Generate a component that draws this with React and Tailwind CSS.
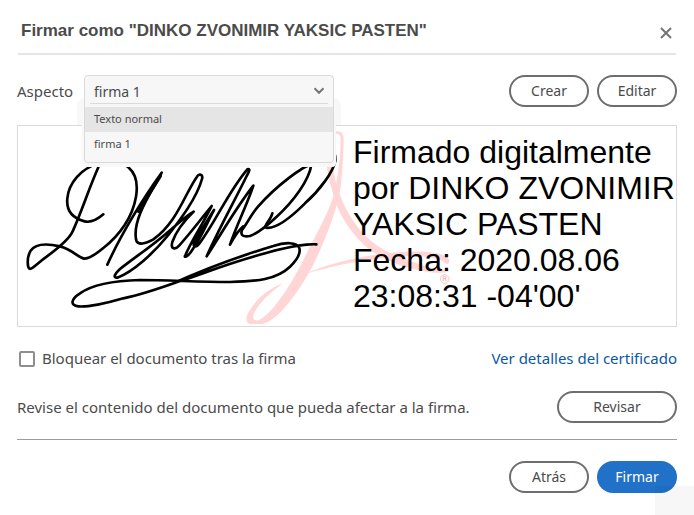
import { useState } from "react";

const appearances = ["Texto normal", "firma 1"];

function PillButton({ children, wide }) {
  return (
    <button
      type="button"
      className={
        (wide ? "w-30" : "w-20") +
        " h-8 shrink-0 rounded-full border-2 border-[#6e6e6e] bg-white text-sm text-[#4b4b4b]"
      }
    >
      {children}
    </button>
  );
}

function AppearanceSelect({ value, setValue }) {
  return (
    <div className="relative h-8 w-[250px]">
      <div className="absolute -left-[7px] top-[23px] h-[27px] w-[264px] rounded-t-lg bg-[#f8f8f8]"></div>
      <div className="absolute -left-[2px] top-[50px] h-[42px] w-[254px] rounded-b bg-[#f8f8f8]"></div>
      <div className="absolute left-0 top-0 w-full overflow-hidden rounded border border-[#dadada] bg-[#f7f7f7]">
        <div className="relative mx-[5px] mb-[3px] border-b border-[#dadada]">
          <select
            id="aspecto"
            value={value}
            onChange={(e) => setValue(e.target.value)}
            className="h-[27px] w-full appearance-none bg-transparent px-1 pt-1 text-sm text-[#4b4b4b] outline-none"
          >
            {appearances.map((name) => (
              <option key={name}>{name}</option>
            ))}
          </select>
          <svg
            viewBox="0 0 12 8"
            className="pointer-events-none absolute right-[3px] top-[11px] h-2 w-3"
            fill="none"
            stroke="#757575"
            strokeWidth="2"
          >
            <path d="M1.5 1.2 L6 5.8 L10.5 1.2" />
          </svg>
        </div>
        <ul className="pb-[5px] text-[11px] text-[#4b4b4b]">
          {appearances.map((name, i) => (
            <li key={name}>
              <button
                type="button"
                onClick={() => setValue(name)}
                className={
                  "block h-[25px] w-full px-[9px] text-left " +
                  (i === 0 ? "bg-[#e5e5e5]" : "")
                }
              >
                {name}
              </button>
            </li>
          ))}
        </ul>
      </div>
    </div>
  );
}

function SignatureDrawing() {
  return (
    <svg
      viewBox="24 18 1974 600"
      className="absolute left-0 top-0 h-[200px] w-[658px]"
      fill="none"
    >
      <g fill="#ffd5d5" transform="translate(510 0)">
        <path d="M462 35 C480 30 492 38 491 60 C489 130 485 190 478 225 C460 300 410 440 340 530 C300 585 265 612 240 612 L215 612 C195 612 195 590 210 570 C230 535 270 505 308 490 C270 520 240 545 222 580 C215 598 225 608 245 596 C290 565 340 480 375 410 C410 340 440 290 458 235 C475 170 482 110 482 60 C482 42 475 40 462 42 Z" />
        <path d="M438 120 L458 120 C462 170 470 205 480 225 C500 280 545 360 630 398 C690 425 760 450 808 452 C795 460 770 460 740 455 C680 445 620 425 570 390 C520 350 480 290 465 240 C450 190 442 160 438 120 Z" />
        <path d="M368 464 C450 430 560 400 680 395 C760 393 800 402 808 420 C808 432 800 435 795 428 C780 412 730 408 680 409 C560 415 470 435 368 464 Z" />
      </g>
      <circle cx="1304" cy="477" r="13" stroke="#ffc4c4" strokeWidth="3" />
      <text
        x="1304"
        y="484"
        textAnchor="middle"
        fill="#ffb8b8"
        fontSize="20"
        fontWeight="bold"
        fontFamily="Liberation Sans, sans-serif"
      >
        R
      </text>
      <g stroke="#000" strokeWidth="8" strokeLinecap="round" strokeLinejoin="round">
        <path d="M280 283 C258 302 240 308 224 304 C190 295 168 275 172 235 C176 190 212 145 268 130 C300 122 335 125 355 142 C378 162 384 195 378 230 C368 290 330 345 280 384 C256 404 236 416 222 416 C204 412 186 388 150 379 C110 370 75 372 62 392 C50 412 52 440 58 446 C66 450 84 428 110 410 C140 388 178 358 188 334 C215 275 235 210 265 142" />
        <path d="M292 434 C330 350 395 240 455 158 C425 215 364 300 379 362 C385 376 405 372 430 358 C500 310 525 220 561 170 C567 160 580 163 576 177 C560 235 510 300 475 345 C430 400 370 455 322 473 C308 474 314 462 330 447 C370 415 430 375 475 335 C500 315 525 290 551 275 C520 305 496 340 487 366 C481 388 496 390 508 376 C545 335 570 300 605 258 C580 310 545 360 526 406 C520 414 534 412 548 388 C575 350 595 300 612 270 C590 305 565 345 552 368 C548 384 560 382 570 368 C620 300 655 215 712 148 C722 144 718 155 710 168 C675 240 625 330 590 409 C635 340 680 260 730 197 C715 245 680 315 660 374 C672 352 684 332 700 319" />
        <path d="M452 168 C430 205 405 240 385 275" />
        <path d="M720 348 C700 352 690 346 696 330 C712 310 722 285 744 260 C800 196 880 138 904 134 C898 180 850 245 800 290 C770 318 742 340 720 348" />
        <path d="M787 280 C782 300 760 318 768 323 C800 328 850 285 885 250 C930 210 970 155 976 122 C977 112 976 106 973 100" />
        <path d="M919 373 C860 370 760 400 680 425 C610 447 560 468 508 484 C450 505 390 525 340 535 C290 550 230 562 205 559 C180 556 182 538 210 520 C250 492 310 482 390 480 C480 480 560 486 660 486 C740 485 800 478 840 440 C866 415 872 398 868 384 C860 366 825 366 790 378 C700 405 600 440 490 490" />
      </g>
    </svg>
  );
}

export default function App() {
  const [appearance, setAppearance] = useState("firma 1");
  const [locked, setLocked] = useState(false);

  return (
    <div className="relative min-h-screen bg-white px-[17px] pb-[22px] font-['Noto_Sans',sans-serif] text-[15px] text-[#4b4b4b]">
      <header className="mx-px flex h-[55px] items-center justify-between border-b-2 border-[#e5e5e5] pl-[3px] pr-1 pt-2">
        <h1 className="font-['Liberation_Sans',sans-serif] text-[17px] font-bold">
          Firmar como "DINKO ZVONIMIR YAKSIC PASTEN"
        </h1>
        <button type="button" aria-label="Cerrar" className="pt-1">
          <svg viewBox="0 0 12 12" className="h-3 w-3" stroke="#757575" strokeWidth="2">
            <path d="M1 1 L11 11 M11 1 L1 11" />
          </svg>
        </button>
      </header>

      <div className="relative z-10 mt-5 flex items-center">
        <label htmlFor="aspecto" className="w-[67px]">
          Aspecto
        </label>
        <AppearanceSelect value={appearance} setValue={setAppearance} />
        <div className="ml-auto flex gap-2">
          <PillButton>Crear</PillButton>
          <PillButton>Editar</PillButton>
        </div>
      </div>

      <div className="relative mt-[18px] border border-[#dadada] pb-3 pl-[335px] pt-2">
        <SignatureDrawing />
        <p className="relative whitespace-nowrap font-['Liberation_Sans',sans-serif] text-[32px] leading-9 text-black">
          Firmado digitalmente
          <br />
          por DINKO ZVONIMIR
          <br />
          YAKSIC PASTEN
          <br />
          Fecha: 2020.08.06
          <br />
          23:08:31 -04'00'
        </p>
      </div>

      <div className="mt-5 flex h-[23px] items-center justify-between">
        <label className="flex items-center gap-[7px] pl-0.5">
          <input
            type="checkbox"
            checked={locked}
            onChange={(e) => setLocked(e.target.checked)}
            className="h-4 w-4 appearance-none rounded-xs border-2 border-[#8e8e8e] bg-white checked:bg-[#2071c7]"
          />
          Bloquear el documento tras la firma
        </label>
        <a href="#certificado" className="text-[#0b57a4]">
          Ver detalles del certificado
        </a>
      </div>

      <div className="mt-[21px] flex items-center justify-between">
        <p>Revise el contenido del documento que pueda afectar a la firma.</p>
        <PillButton wide>Revisar</PillButton>
      </div>

      <hr className="mt-4 border-[#9c9c9c]" />

      <div className="mt-[21px] flex justify-end gap-2">
        <PillButton>Atrás</PillButton>
        <button type="button" className="h-8 w-20 rounded-full bg-[#2071c7] text-sm text-white">
          Firmar
        </button>
      </div>

      <div className="pointer-events-none absolute bottom-0 right-0 h-[29px] w-[39px] bg-black/3"></div>
    </div>
  );
}
